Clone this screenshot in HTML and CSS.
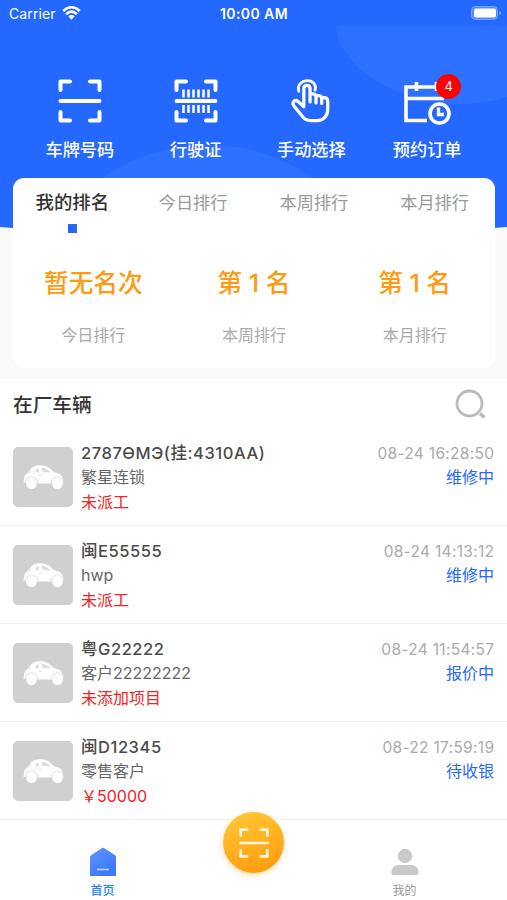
FILE: index.html
```html
<!DOCTYPE html>
<html lang="zh-CN">
<head>
<meta charset="utf-8">
<title>首页</title>
<link rel="stylesheet" href="styles.css">
</head>
<body>
<svg class="defs" width="0" height="0">
  <defs>
    <symbol id="scan" viewBox="0 0 44 44">
      <path d="M2.500 11V2.500H12M32 2.500h9.500V11M2.500 33v8.500H12M32 41.500h9.500V33M2.500 22h39" fill="none" stroke="currentColor" stroke-width="4" stroke-linecap="round" stroke-linejoin="round"/>
    </symbol>
    <symbol id="car" viewBox="0 0 60 60">
      <path fill="#fff" d="M10.500 36L11.500 29L14.500 26C17 22.500 19 19.500 23 18.700C29 17.500 34 18.500 37.500 22L41.500 25.500C46 26 49 28 49.500 31L50.500 33L49.500 36H39V36.500H24V36Z"/>
      <path fill="#dcdcdc" d="M22 25.200Q22.500 22 25.700 21.200V25.400ZM28 20.800Q33.500 20.800 37.500 25.400L30 24.900ZM14.600 26.500L18 22.300L17 25.700ZM26 27.800h2.500v1h-2.500z"/>
      <path d="M12.200 36.500A6.300 6.600 0 1 1 24.800 36.500M38.200 36.500A6.300 6.600 0 1 1 50.800 36.500" fill="none" stroke="#d0d0d0" stroke-width=".8"/>
      <ellipse cx="18.500" cy="36.300" rx="5.300" ry="6" fill="#fff"/>
      <ellipse cx="44.500" cy="36.300" rx="5.300" ry="6" fill="#fff"/>
    </symbol>
    <linearGradient id="homeFill" x1="0" y1="0" x2="0.600" y2="1"><stop offset="0" stop-color="#6096ff"/><stop offset="1" stop-color="#3b78fa"/></linearGradient>
  </defs>
</svg>
<div class="app">
  <header class="hero">
    <svg class="hero-bg" viewBox="0 0 507 240" aria-hidden="true">
      <path d="M0 0H507V227Q253 249 0 227Z" fill="#2468ff"/>
      <path d="M336 26H507V97Q485 104 463 104C394 104 339 66 336 26Z" fill="#2e70ff"/>
      <path d="M100 179Q150 145 208 145T314 179Z" fill="#2e70ff"/>
    </svg>
    <div class="status">
      <div class="carrier"><span>Carrier</span>
        <svg width="19" height="14" viewBox="0 0 19 14"><g fill="none" stroke="#fff" stroke-width="2.600"><path d="M1.200 5Q9.500-2.500 17.800 5M4.100 8.200Q9.500 3.200 14.900 8.200"/></g><path d="M6.300 10.300Q9.500 7.600 12.700 10.300L9.500 13.700Z" fill="#fff"/></svg>
      </div>
      <div class="clock">10:00 AM</div>
      <div class="battery"><svg width="31" height="15" viewBox="0 0 31 15"><rect x=".5" y=".5" width="26" height="13" rx="4" fill="#5089ff" stroke="#7ca6ff"/><rect x="3" y="2.500" width="22" height="9" rx="1.800" fill="#fff"/><path d="M28.500 5v4q1.500-.5 1.500-2t-1.500-2" fill="#90b3ff"/></svg></div>
    </div>
    <nav class="actions">
      <a class="action"><svg class="action-icon" viewBox="0 0 44 44"><use href="#scan"/></svg><span>车牌号码</span></a>
      <a class="action"><svg class="action-icon" viewBox="0 0 44 44"><use href="#scan"/><path d="M9.500 10.500v8m5-8v8m5-8v8m5-8v8m5-8v8m5-8v8M9.500 26v8m5-8v8m5-8v8m5-8v8m5-8v8m5-8v8" stroke="#fff" stroke-width="2.500"/></svg><span>行驶证</span></a>
      <a class="action"><svg class="action-icon" viewBox="0 0 44 46"><g fill="none" stroke="#fff" stroke-width="3.400" stroke-linecap="round" stroke-linejoin="round"><path d="M14.500 29V10c0-4.500 6.500-4.500 6.500 0v14M21 15.500h2.500q3.700 0 3.700 3V25M27.200 17.500h2.300q3.700 0 3.700 3V25.500M33.200 19.500h2q4.300 0 4.300 4V32c0 7-5 11.500-11 11.500h-7c-4 0-6.500-1.500-9-5L4 28c-2.500-4 1.500-7 4.500-4.500l6 5.500"/><path d="M9.200 12.800C5.500-1 29.500-2.500 26.300 11.500" stroke-width="3"/></g></svg><span>手动选择</span></a>
      <a class="action"><svg class="action-icon order-icon" viewBox="0 0 50 46"><g fill="none" stroke="#fff" stroke-width="3.600"><path d="M25 41.500H4V8h38v10M4 19.500h38M14.500 3v9M34.500 3v9"/><circle cx="37.500" cy="34.500" r="9.500"/><path d="M36.500 28.500v7h5.500" stroke-width="3.300"/></g></svg><span>预约订单</span><b class="badge">4</b></a>
    </nav>
    <section class="rank">
      <div class="tabs"><span class="active">我的排名</span><span>今日排行</span><span>本周排行</span><span>本月排行</span></div>
      <div class="scores">
        <div><strong>暂无名次</strong><span>今日排行</span></div>
        <div><strong>第 1 名</strong><span>本周排行</span></div>
        <div><strong>第 1 名</strong><span>本月排行</span></div>
      </div>
    </section>
  </header>
  <main class="vehicles">
    <div class="section-head"><h2>在厂车辆</h2><svg width="32" height="32" viewBox="0 0 32 32" fill="none" stroke="#bbb"><circle cx="14.500" cy="14.500" r="12.500" stroke-width="2.800"/><path d="M25 24.500l4.500 4" stroke-width="3.500"/></svg></div>
    <article class="row"><svg class="thumb"><use href="#car"/></svg><div class="info"><h3>2787ӨMЭ(挂:4310AA)</h3><p>繁星连锁</p><p class="alert">未派工</p></div><div class="meta"><time>08-24 16:28:50</time><span>维修中</span></div></article>
    <article class="row"><svg class="thumb"><use href="#car"/></svg><div class="info"><h3>闽E55555</h3><p>hwp</p><p class="alert">未派工</p></div><div class="meta"><time>08-24 14:13:12</time><span>维修中</span></div></article>
    <article class="row"><svg class="thumb"><use href="#car"/></svg><div class="info"><h3>粤G22222</h3><p>客户22222222</p><p class="alert">未添加项目</p></div><div class="meta"><time>08-24 11:54:57</time><span>报价中</span></div></article>
    <article class="row"><svg class="thumb"><use href="#car"/></svg><div class="info"><h3>闽D12345</h3><p>零售客户</p><p class="alert">￥50000</p></div><div class="meta"><time>08-22 17:59:19</time><span>待收银</span></div></article>
  </main>
  <nav class="tabbar">
    <a class="tab current"><svg width="28" height="30" viewBox="0 0 28 30"><path d="M1 10Q1 9 2 8.300L13 1Q14 .4 15 1L26 8.300Q27 9 27 10V29H1Z" fill="url(#homeFill)"/><path d="M8 22.500h12" stroke="#c5d8ff" stroke-width="1.500"/></svg><span>首页</span></a>
    <a class="scan-button"><svg width="30" height="30"><use href="#scan"/></svg></a>
    <a class="tab"><svg width="28" height="30" viewBox="0 0 28 30"><circle cx="14" cy="9" r="7.200" fill="#c9c9c9"/><path d="M.5 26v-1c0-4 3-7 7-7h13c4 0 7 3 7 7v1q0 2-2 2h-23q-2 0-2-2" fill="#c9c9c9"/></svg><span>我的</span></a>
  </nav>
</div>
</body>
</html>
```

FILE: styles.css
```css
* { box-sizing: border-box; margin: 0; padding: 0; }
body { font-family: Inter, "Noto Sans CJK SC", sans-serif; background: #fff; color: #333; }
.defs { display: block; position: absolute; }
.app { width: 507px; height: 900px; overflow: hidden; display: flex; flex-direction: column; }
.hero { position: relative; height: 379px; background: #fafafa; flex: none; }
.hero-bg { position: absolute; left: 0; top: 0; width: 507px; height: 240px; }
.status { position: relative; height: 27px; display: grid; grid-template-columns: 1fr 1fr 1fr; align-items: center; padding: 0 5px 0 9px; color: #fff; font-size: 14px; }
.carrier { display: flex; align-items: center; gap: 6px; letter-spacing: .1px; }
.carrier svg { margin-top: -1px; }
.clock { text-align: center; font-weight: 600; letter-spacing: .4px; margin-left: -3px; }
.battery { display: flex; justify-content: flex-end; }
.actions { position: relative; display: grid; grid-template-columns: repeat(4, 1fr); padding: 52px 22px 0; height: 151px; color: #fff; }
.action { position: relative; display: flex; flex-direction: column; align-items: center; gap: 14px; font-size: 17.200px; font-weight: 500; line-height: 26px; white-space: nowrap; }
.action-icon { width: 44px; height: 44px; overflow: visible; }
.order-icon { width: 50px; height: 46px; margin-bottom: -2px; }
.badge { position: absolute; left: 67px; top: -5px; width: 25px; height: 25px; border-radius: 50%; background: #f00; font-size: 13px; font-weight: 400; line-height: 25px; text-align: center; }
.rank { position: relative; margin: 0 12px 0 13px; height: 190px; background: #fff; border-radius: 11px; }
.tabs { display: grid; grid-template-columns: repeat(4, 1fr); height: 55px; padding-top: 11px; margin-left: -1px; text-align: center; color: #999; font-size: 17.200px; line-height: 27px; }
.tabs .active { color: #333; font-size: 18.400px; font-weight: 500; display: flex; flex-direction: column; align-items: center; }
.tabs .active::after { content: ""; width: 9px; height: 9px; background: #2468ff; margin: 8px 0 0 1px; }
.scores { display: grid; grid-template-columns: repeat(3, 1fr); padding-top: 31px; text-align: center; }
.scores div { display: flex; flex-direction: column; gap: 19px; }
.scores strong { color: #ff990d; font-size: 24.700px; line-height: 38px; font-weight: 500; }
.scores span { color: #aaa; font-size: 16px; line-height: 28px; }
.vehicles { flex: none; background: #fff; }
.section-head { height: 49px; display: flex; justify-content: space-between; align-items: center; padding: 2px 20px 0 13px; }
.section-head h2 { font-size: 19.700px; font-weight: 500; line-height: 30px; }
.row { height: 98px; display: flex; padding: 0 13px; border-bottom: 1px solid #f1f1f1; }
.thumb { width: 60px; height: 60px; margin-top: 19px; background: #d0d0d0; border-radius: 5px; flex: none; }
.info { margin-left: 8px; padding-top: 13px; flex: 1; min-width: 0; }
.info h3 { font-size: 16.500px; line-height: 25px; margin-bottom: -1px; font-weight: 500; color: #4a4a4a; letter-spacing: .55px; white-space: nowrap; }
.info p { font-size: 16px; line-height: 24.500px; color: #666; }
.info .alert { color: #f52222; }
.meta { display: flex; flex-direction: column; align-items: flex-end; padding-top: 13px; font-size: 16px; line-height: 24.500px; white-space: nowrap; }
.meta time { color: #aaa; font-size: 15.500px; line-height: 25px; margin-bottom: -1px; letter-spacing: .3px; margin-right: -.3px; }
.meta span { color: #2468ff; }
.tabbar { flex: 1; display: grid; grid-template-columns: 205px 97px 205px; background: #fff; }
.tab { display: flex; flex-direction: column; align-items: center; padding-top: 27px; gap: 4px; color: #999; font-size: 12px; line-height: 19px; }
.tab.current { color: #1683ff; font-weight: 500; }
.scan-button { position: relative; justify-self: center; width: 61px; height: 61px; margin-top: -8px; border-radius: 50%; background: linear-gradient(160deg, #ffca38, #ff980b); box-shadow: 0 2px 6px #ff990b50; display: grid; place-items: center; color: #fff6df; }
```
